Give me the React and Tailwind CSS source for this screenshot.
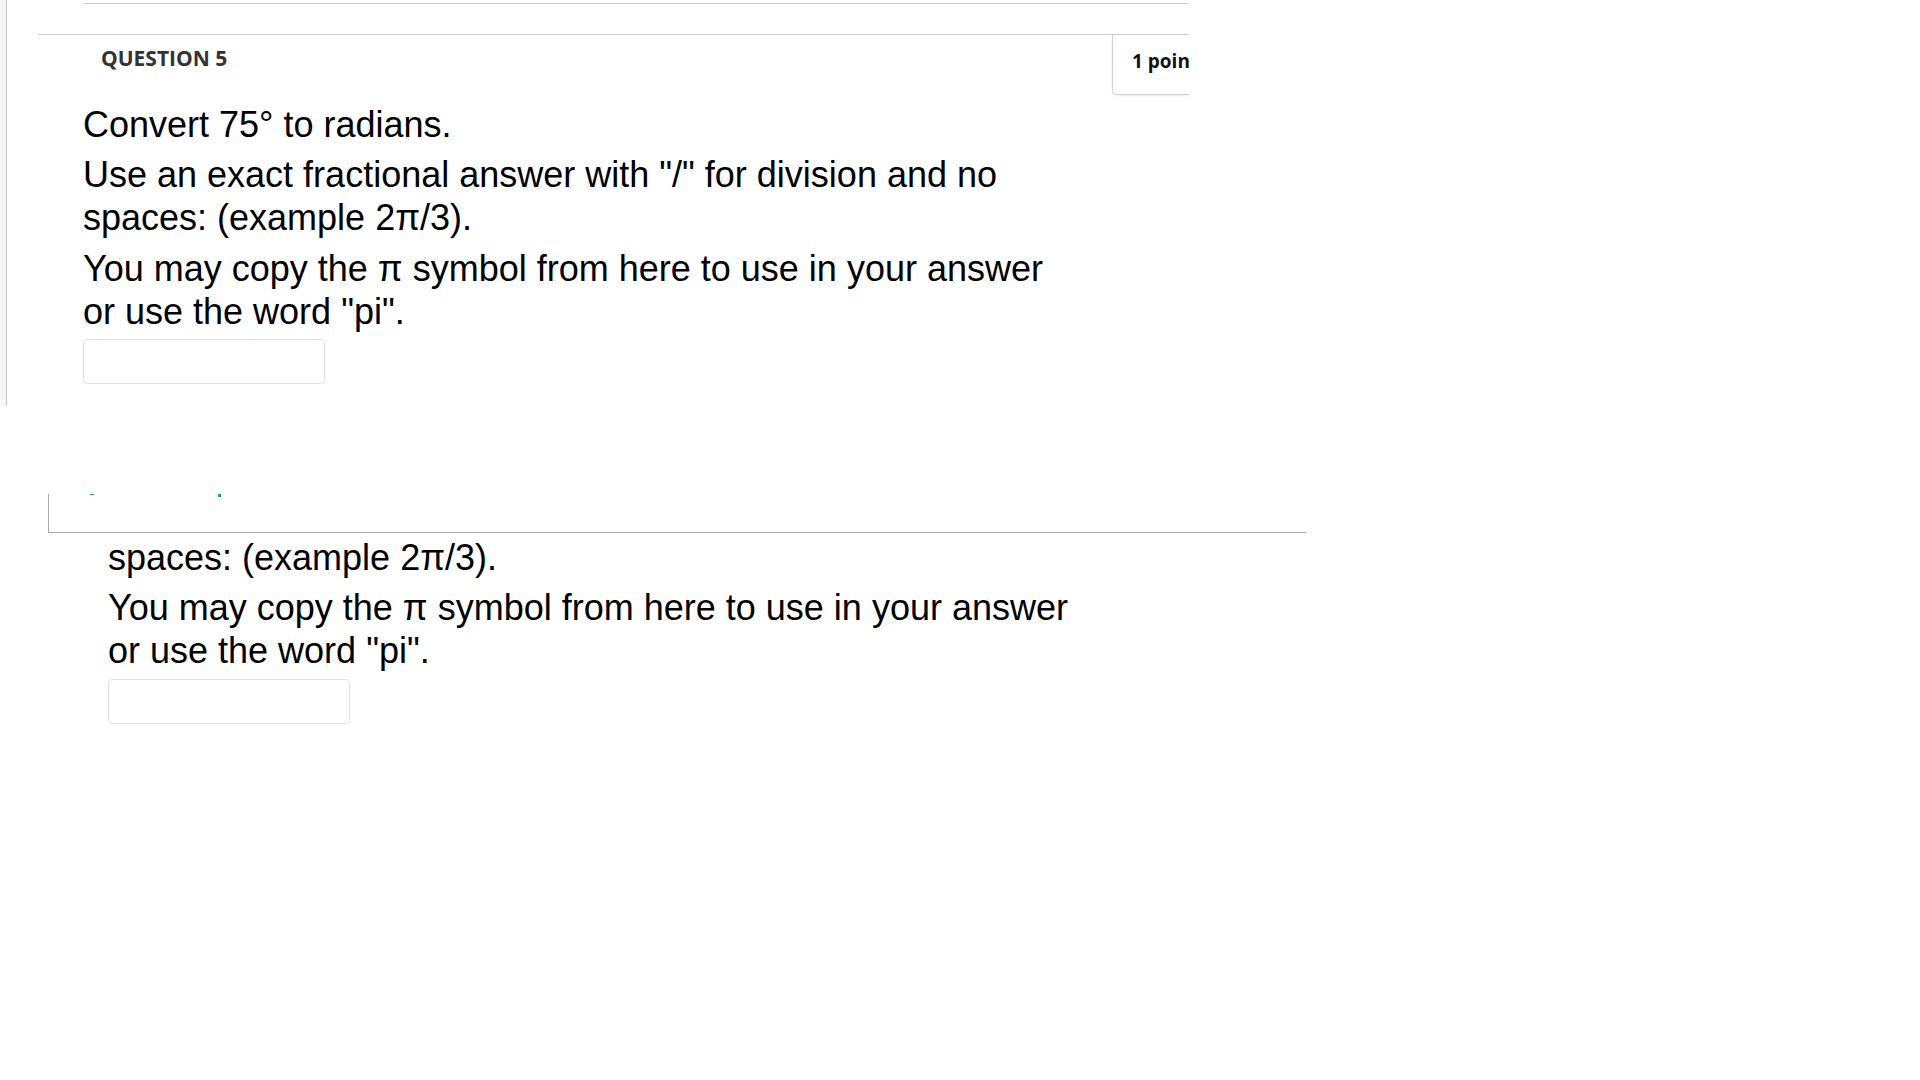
import React from 'react'

const body = "font-['Liberation_Sans',Arial,sans-serif] text-[36px] leading-[43px] text-black"

function AnswerInput() {
  return (
    <input
      type="text"
      className="block w-[242px] h-[45px] rounded-[4px] border border-[#e3e3e3] bg-white outline-none"
    />
  )
}

export default function App() {
  return (
    <div className="w-[1920px] h-[1080px] bg-white overflow-hidden">
      {/* Upper question card */}
      <div className="flex h-[406px] w-[1189px] overflow-hidden">
        <div className="w-[7px] shrink-0 bg-[#f6f6f6] border-r border-[#c9c9c9]" />
        <div className="flex-1 min-w-0">
          <div className="mt-[3px] ml-[76px] border-t border-[#cfcfcf]" />
          <div className="mt-[30px] ml-[31px] border-t border-[#cfcfcf]">
            <div className="flex h-[60px]">
              <div className="w-[1074px] shrink-0 pl-[63px] pt-[9px]">
                <span className="font-['Open_Sans',sans-serif] font-bold text-[21px] leading-[28px] text-[#333333]">
                  QUESTION 5
                </span>
              </div>
              <div className="w-[140px] shrink-0 h-[60px] border-l border-b border-[#d2d2d2] rounded-bl-[5px] shadow-[0_1px_2px_rgba(0,0,0,0.08)] pl-[19px] pt-[12px]">
                <span className="font-['Open_Sans',sans-serif] font-bold text-[19px] leading-[28px] text-[#111111] whitespace-nowrap">
                  1 points
                </span>
              </div>
            </div>
          </div>

          <div className={`ml-[76px] w-[980px] pt-[8px] ${body}`}>
            <p>Convert 75° to radians.</p>
            <p className="mt-[7px]">Use an exact fractional answer with "/" for division and no spaces: (example 2π/3).</p>
            <p className="mt-[8px]">You may copy the π symbol from here to use in your answer or use the word "pi".</p>
            <div className="mt-[6px]">
              <AnswerInput />
            </div>
          </div>
        </div>
      </div>

      {/* Lower repeated fragment */}
      <div className="mt-[88px] ml-[48px] w-[1258px] h-[39px] border-l border-b border-[#ababab] flex items-start">
        <span className="ml-[41px] w-[4px] h-[1px] bg-[#1b9db5]" />
        <span className="ml-[124px] w-[3px] h-[3px] bg-[#1b9db5]" />
      </div>
      <div className={`ml-[108px] w-[980px] mt-[3px] ${body}`}>
        <p>spaces: (example 2π/3).</p>
        <p className="mt-[7px]">You may copy the π symbol from here to use in your answer or use the word "pi".</p>
        <div className="mt-[7px]">
          <AnswerInput />
        </div>
      </div>
    </div>
  )
}
